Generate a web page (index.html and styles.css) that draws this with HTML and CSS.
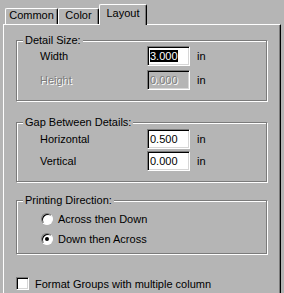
FILE: index.html
```html
<!DOCTYPE html>
<html lang="en">
<head>
  <meta charset="UTF-8" />
  <title>Layout</title>
  <link rel="stylesheet" href="styles.css">
</head>
<body>

<div class="tabs">
  <div class="tab tab-common">Common</div>
  <div class="tab tab-color">Color</div>
  <div class="tab tab-layout active">Layout</div>
</div>

<div class="panel">

  <!-- Detail Size -->
  <div class="group group-detail">
    <div class="group-title">Detail Size:</div>
    <div class="rows rows-detail">
      <div class="row">
        <span class="label">Width</span>
        <div class="edit"><span class="sel">3.000</span></div>
        <span class="unit">in</span>
      </div>
      <div class="row row-gap4">
        <span class="label disabled">Height</span>
        <div class="edit edit-disabled"><span class="disabled">0.000</span></div>
        <span class="unit">in</span>
      </div>
    </div>
  </div>

  <!-- Gap Between Details -->
  <div class="group group-gap">
    <div class="group-title">Gap Between Details:</div>
    <div class="rows rows-gap">
      <div class="row">
        <span class="label">Horizontal</span>
        <div class="edit">0.500</div>
        <span class="unit">in</span>
      </div>
      <div class="row row-gap2">
        <span class="label">Vertical</span>
        <div class="edit">0.000</div>
        <span class="unit">in</span>
      </div>
    </div>
  </div>

  <!-- Printing Direction -->
  <div class="group group-print">
    <div class="group-title">Printing Direction:</div>
    <div class="rows rows-print">
      <div class="radio-row">
        <span class="radio"></span>
        <span>Across then Down</span>
      </div>
      <div class="radio-row">
        <span class="radio checked"></span>
        <span>Down then Across</span>
      </div>
    </div>
  </div>

  <div class="check-row">
    <span class="checkbox"></span>
    <span>Format Groups with multiple column</span>
  </div>

</div>

</body>
</html>
```

FILE: styles.css
```css
body {
  margin: 0;
  width: 284px;
  height: 293px;
  overflow: hidden;
  background: #b5b5b5;
  font-family: "Liberation Sans", Arial, sans-serif;
  font-size: 11px;
  color: #000;
}

/* tabs */
.tabs {
  display: flex;
  align-items: flex-end;
  height: 24px;
  padding-left: 5px;
}

.tab {
  box-sizing: border-box;
  height: 16px;
  line-height: 13px;
  text-align: center;
  border-top: 1px solid #fff;
  border-left: 1px solid #fff;
  border-right: 1px solid #000;
  border-radius: 2px 2px 0 0;
  box-shadow: inset -1px 0 #7b7b7b;
}

.tab-common { width: 53px; }
.tab-color { width: 41px; }

.tab.active {
  position: relative;
  width: 48px;
  height: 21px;
  margin-bottom: -1px;
  padding-top: 2px;
  background: #b5b5b5;
}

/* panel */
.panel {
  box-sizing: border-box;
  margin-left: 3px;
  width: 278px;
  height: 269px;
  border-top: 1px solid #fff;
  border-left: 1px solid #fff;
  border-right: 1px solid #000;
  box-shadow: inset -1px 0 #7b7b7b;
}

/* group boxes */
.group {
  box-sizing: border-box;
  width: 251px;
  margin-left: 12px;
  border: 1px solid #7b7b7b;
  box-shadow: inset 1px 1px 0 #fff, 1px 1px 0 #fff;
}

.group-detail { margin-top: 15px; padding-bottom: 10px; }
.group-gap { margin-top: 21px; padding-bottom: 10px; }
.group-print { margin-top: 18px; padding-bottom: 4px; }

.group-title {
  width: fit-content;
  height: 13px;
  line-height: 13px;
  margin: -7px 0 0 6px;
  padding: 0 2px;
  background: #b5b5b5;
}

.rows-detail { margin-top: -1px; }
.rows-gap { margin-top: 0; }
.rows-print { margin-top: 2px; }

.row {
  display: flex;
  align-items: center;
  height: 20px;
}

.row-gap4 { margin-top: 4px; }
.row-gap2 { margin-top: 2px; }

.label {
  width: 107px;
  padding-left: 23px;
}

.unit {
  margin-left: 7px;
}

.edit {
  box-sizing: border-box;
  width: 43px;
  height: 20px;
  padding-left: 1px;
  line-height: 16px;
  background: #fff;
  border-top: 1px solid #7b7b7b;
  border-left: 1px solid #7b7b7b;
  border-right: 1px solid #fff;
  border-bottom: 1px solid #fff;
  box-shadow: inset 1px 1px 0 #000, inset -1px -1px 0 #d6d6d6;
  padding-top: 1px;
  padding-left: 2px;
}

.edit-disabled {
  background: #b5b5b5;
}

.sel {
  background: #000;
  color: #fff;
}

.disabled {
  color: #7b7b7b;
  text-shadow: 1px 1px 0 #fff;
}

/* radios */
.radio-row {
  display: flex;
  align-items: center;
  height: 20px;
  padding-left: 24px;
}

.radio {
  box-sizing: border-box;
  width: 12px;
  height: 12px;
  margin-right: 5px;
  border-radius: 50%;
  background: #fff;
  border: 1px solid;
  border-color: #7b7b7b #fff #fff #7b7b7b;
  box-shadow: inset 1px 1px 0 #000;
  display: flex;
  align-items: center;
  justify-content: center;
}

.radio.checked::after {
  content: "";
  width: 4px;
  height: 4px;
  border-radius: 50%;
  background: #000;
}

/* checkbox */
.check-row {
  display: flex;
  align-items: center;
  height: 13px;
  margin-top: 23px;
  padding-left: 12px;
}

.checkbox {
  box-sizing: border-box;
  width: 13px;
  height: 13px;
  margin-right: 6px;
  background: #fff;
  border-top: 1px solid #7b7b7b;
  border-left: 1px solid #7b7b7b;
  border-right: 1px solid #fff;
  border-bottom: 1px solid #fff;
  box-shadow: inset 1px 1px 0 #000, inset -1px -1px 0 #d6d6d6;
}
```
